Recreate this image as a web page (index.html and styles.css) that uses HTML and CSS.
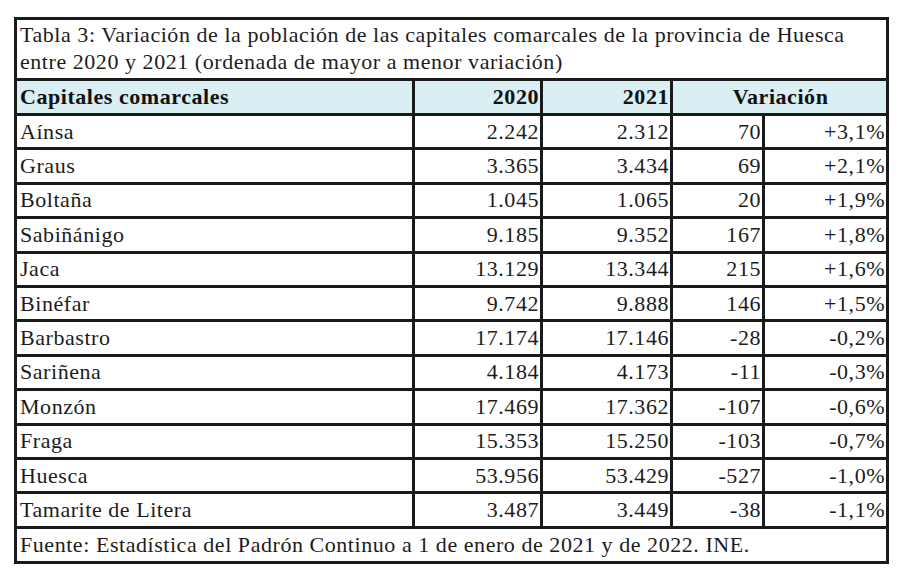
FILE: index.html
```html
<!DOCTYPE html>
<html lang="es">
<head>
<meta charset="utf-8">
<title>Tabla 3</title>
<link rel="stylesheet" href="styles.css">
</head>
<body>
<table class="data">
  <colgroup>
    <col class="c-name">
    <col class="c-num">
    <col class="c-num2">
    <col class="c-var">
    <col class="c-pct">
  </colgroup>
  <tbody>
    <tr class="title-row"><td colspan="5">Tabla 3: Variación de la población de las capitales comarcales de la provincia de Huesca entre 2020 y 2021 (ordenada de mayor a menor variación)</td></tr>
    <tr class="head-row">
      <th class="l">Capitales comarcales</th>
      <th class="r">2020</th>
      <th class="r">2021</th>
      <th class="c" colspan="2">Variación</th>
    </tr>
    <tr><td class="l">Aínsa</td><td class="r">2.242</td><td class="r">2.312</td><td class="r">70</td><td class="r">+3,1%</td></tr>
    <tr><td class="l">Graus</td><td class="r">3.365</td><td class="r">3.434</td><td class="r">69</td><td class="r">+2,1%</td></tr>
    <tr><td class="l">Boltaña</td><td class="r">1.045</td><td class="r">1.065</td><td class="r">20</td><td class="r">+1,9%</td></tr>
    <tr><td class="l">Sabiñánigo</td><td class="r">9.185</td><td class="r">9.352</td><td class="r">167</td><td class="r">+1,8%</td></tr>
    <tr><td class="l">Jaca</td><td class="r">13.129</td><td class="r">13.344</td><td class="r">215</td><td class="r">+1,6%</td></tr>
    <tr><td class="l">Binéfar</td><td class="r">9.742</td><td class="r">9.888</td><td class="r">146</td><td class="r">+1,5%</td></tr>
    <tr><td class="l">Barbastro</td><td class="r">17.174</td><td class="r">17.146</td><td class="r">-28</td><td class="r">-0,2%</td></tr>
    <tr><td class="l">Sariñena</td><td class="r">4.184</td><td class="r">4.173</td><td class="r">-11</td><td class="r">-0,3%</td></tr>
    <tr><td class="l">Monzón</td><td class="r">17.469</td><td class="r">17.362</td><td class="r">-107</td><td class="r">-0,6%</td></tr>
    <tr><td class="l">Fraga</td><td class="r">15.353</td><td class="r">15.250</td><td class="r">-103</td><td class="r">-0,7%</td></tr>
    <tr><td class="l">Huesca</td><td class="r">53.956</td><td class="r">53.429</td><td class="r">-527</td><td class="r">-1,0%</td></tr>
    <tr><td class="l">Tamarite de Litera</td><td class="r">3.487</td><td class="r">3.449</td><td class="r">-38</td><td class="r">-1,1%</td></tr>
    <tr class="foot-row"><td colspan="5">Fuente: Estadística del Padrón Continuo a 1 de enero de 2021 y de 2022. INE.</td></tr>
  </tbody>
</table>
</body>
</html>
```
FILE: styles.css
```css
html, body {
  margin: 0;
  padding: 0;
  background: #ffffff;
}

body {
  padding: 17px 0 0 14px;
  font-family: "Liberation Serif", "Times New Roman", serif;
  color: #1c1c1c;
}

.data {
  border-collapse: collapse;
  width: 872px;
  table-layout: fixed;
  font-size: 22px;
  letter-spacing: 0.55px;
}

.c-name { width: 398px; }
.c-num { width: 128px; }
.c-num2 { width: 130px; }
.c-var { width: 92px; }
.c-pct { width: 124px; }

.data td, .data th {
  border: 3px solid #1a1a1a;
  height: 31.4px;
  padding: 0 1px 0 3px;
  line-height: 24px;
  white-space: nowrap;
  font-weight: normal;
}

.data th {
  height: 32px;
  font-weight: bold;
  color: #111111;
  background: #d9eff3;
}

.title-row td {
  white-space: normal;
  height: auto;
  padding: 1px 4px 3px 3px;
  line-height: 27px;
}

.foot-row td {
  height: 32.4px;
}

.l { text-align: left; }
.r { text-align: right; }
.c { text-align: center; }
```
